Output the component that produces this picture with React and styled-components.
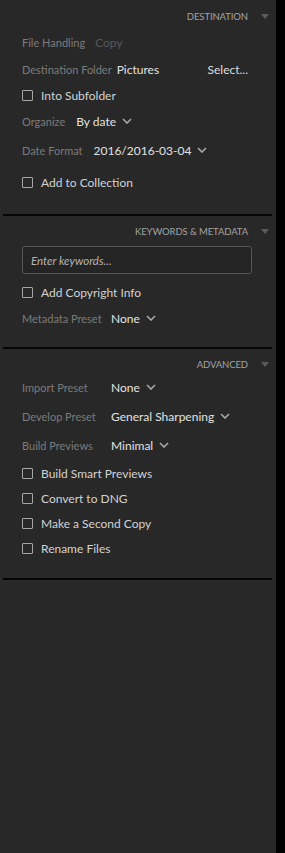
import React from 'react';
import styled, { createGlobalStyle } from 'styled-components';

const GlobalStyle = createGlobalStyle`
    html, body {
        margin: 0;
        padding: 0;
        background: #000;
    }
    body {
        font-family: 'Lato', 'Open Sans', sans-serif;
    }
`;

function Chevron() {
    return (
        <SCChevron width="10" height="6" viewBox="0 0 10 6">
            <path d="M1 1 L5 5 L9 1" fill="none" stroke="#a9a9a9" strokeWidth="1.6" />
        </SCChevron>
    );
}

function Header({ title }) {
    return (
        <SCHeader>
            <span>{title}</span>
            <SCTriangle />
        </SCHeader>
    );
}

function Check({ label, mt }) {
    return (
        <SCRow $mt={mt}>
            <SCBox />
            <SCCheckLabel>{label}</SCCheckLabel>
        </SCRow>
    );
}

function Field({ label, value, mt, labelWidth, gap = 11, dropdown, muted, extra }) {
    return (
        <SCRow $mt={mt}>
            <SCLabel $width={labelWidth}>{label}</SCLabel>
            <SCValue $gap={gap} $muted={muted}>{value}</SCValue>
            {dropdown && <Chevron />}
            {extra && <SCAction>{extra}</SCAction>}
        </SCRow>
    );
}

function App() {
    return (
        <>
            <GlobalStyle />
            <SCPage>
                <SCPanel>
                    <SCSection $top={8} $bottom={22}>
                        <Header title="Destination" />
                        <Field label="File Handling" value="Copy" muted gap={10} mt={8} />
                        <Field label="Destination Folder" value="Pictures" gap={5} extra="Select..." mt={7} />
                        <Check label="Into Subfolder" mt={6} />
                        <Field label="Organize" value="By date" dropdown mt={6} />
                        <Field label="Date Format" value="2016/2016-03-04" dropdown mt={9} />
                        <Check label="Add to Collection" mt={12} />
                    </SCSection>
                    <SCDivider />
                    <SCSection $top={7} $bottom={19}>
                        <Header title="Keywords & Metadata" />
                        <SCInput placeholder="Enter keywords..." />
                        <Check label="Add Copyright Info" mt={8} />
                        <Field label="Metadata Preset" value="None" labelWidth={89} gap={0} dropdown mt={6} />
                    </SCSection>
                    <SCDivider />
                    <SCSection $top={7} $bottom={20}>
                        <Header title="Advanced" />
                        <Field label="Import Preset" value="None" labelWidth={89} gap={0} dropdown mt={5} />
                        <Field label="Develop Preset" value="General Sharpening" labelWidth={89} gap={0} dropdown mt={9} />
                        <Field label="Build Previews" value="Minimal" labelWidth={89} gap={0} dropdown mt={9} />
                        <Check label="Build Smart Previews" mt={8} />
                        <Check label="Convert to DNG" mt={5} />
                        <Check label="Make a Second Copy" mt={5} />
                        <Check label="Rename Files" mt={5} />
                    </SCSection>
                    <SCDivider />
                </SCPanel>
            </SCPage>
        </>
    );
}

const SCPage = styled.div`
    display: flex;
    min-height: 853px;
    background: #000;
`;

const SCPanel = styled.div`
    width: 276px;
    background-color: #282828;
    display: flex;
    flex-direction: column;
`;

const SCSection = styled.div`
    display: flex;
    flex-direction: column;
    padding: ${(p) => p.$top}px 0 ${(p) => p.$bottom}px 22px;
`;

const SCDivider = styled.div`
    height: 2px;
    margin: 0 4px 0 3px;
    background-color: #050505;
`;

const SCHeader = styled.div`
    display: flex;
    align-items: center;
    justify-content: flex-end;
    height: 16px;
    padding-right: 7px;
    gap: 13px;
    span {
        font-size: 9.5px;
        text-transform: uppercase;
        color: #a3a3a3;
        letter-spacing: -0.1px;
    }
`;

const SCTriangle = styled.div`
    width: 0;
    height: 0;
    border-left: 4px solid transparent;
    border-right: 4px solid transparent;
    border-top: 5px solid #5b5b5b;
`;

const SCRow = styled.div`
    display: flex;
    align-items: center;
    height: 20px;
    margin-top: ${(p) => p.$mt || 0}px;
    padding-right: 28px;
`;

const SCLabel = styled.span`
    font-size: 11px;
    color: #7b7b7b;
    white-space: nowrap;
    ${(p) => p.$width && `width: ${p.$width}px; flex-shrink: 0;`}
`;

const SCValue = styled.span`
    font-size: 12px;
    margin-left: ${(p) => p.$gap}px;
    margin-right: 6px;
    color: ${(p) => (p.$muted ? '#585858' : '#e2e2e2')};
    white-space: nowrap;
`;

const SCAction = styled.span`
    margin-left: auto;
    font-size: 12px;
    color: #dcdcdc;
`;

const SCChevron = styled.svg`
    display: block;
    flex-shrink: 0;
`;

const SCBox = styled.div`
    width: 9px;
    height: 9px;
    border: 1px solid #a6a6a6;
    border-radius: 1px;
    flex-shrink: 0;
`;

const SCCheckLabel = styled.span`
    margin-left: 8px;
    font-size: 12px;
    color: #d2d2d2;
`;

const SCInput = styled.input`
    box-sizing: border-box;
    width: 230px;
    height: 28px;
    margin-top: 7px;
    padding: 0 8px;
    background: #242424;
    border: 1px solid #565656;
    border-radius: 3px;
    font-family: 'Lato', 'Open Sans', sans-serif;
    font-size: 11.5px;
    font-style: italic;
    color: #ddd;
    outline: none;
    &::placeholder {
        color: #b4b4b4;
    }
`;

export default App;
